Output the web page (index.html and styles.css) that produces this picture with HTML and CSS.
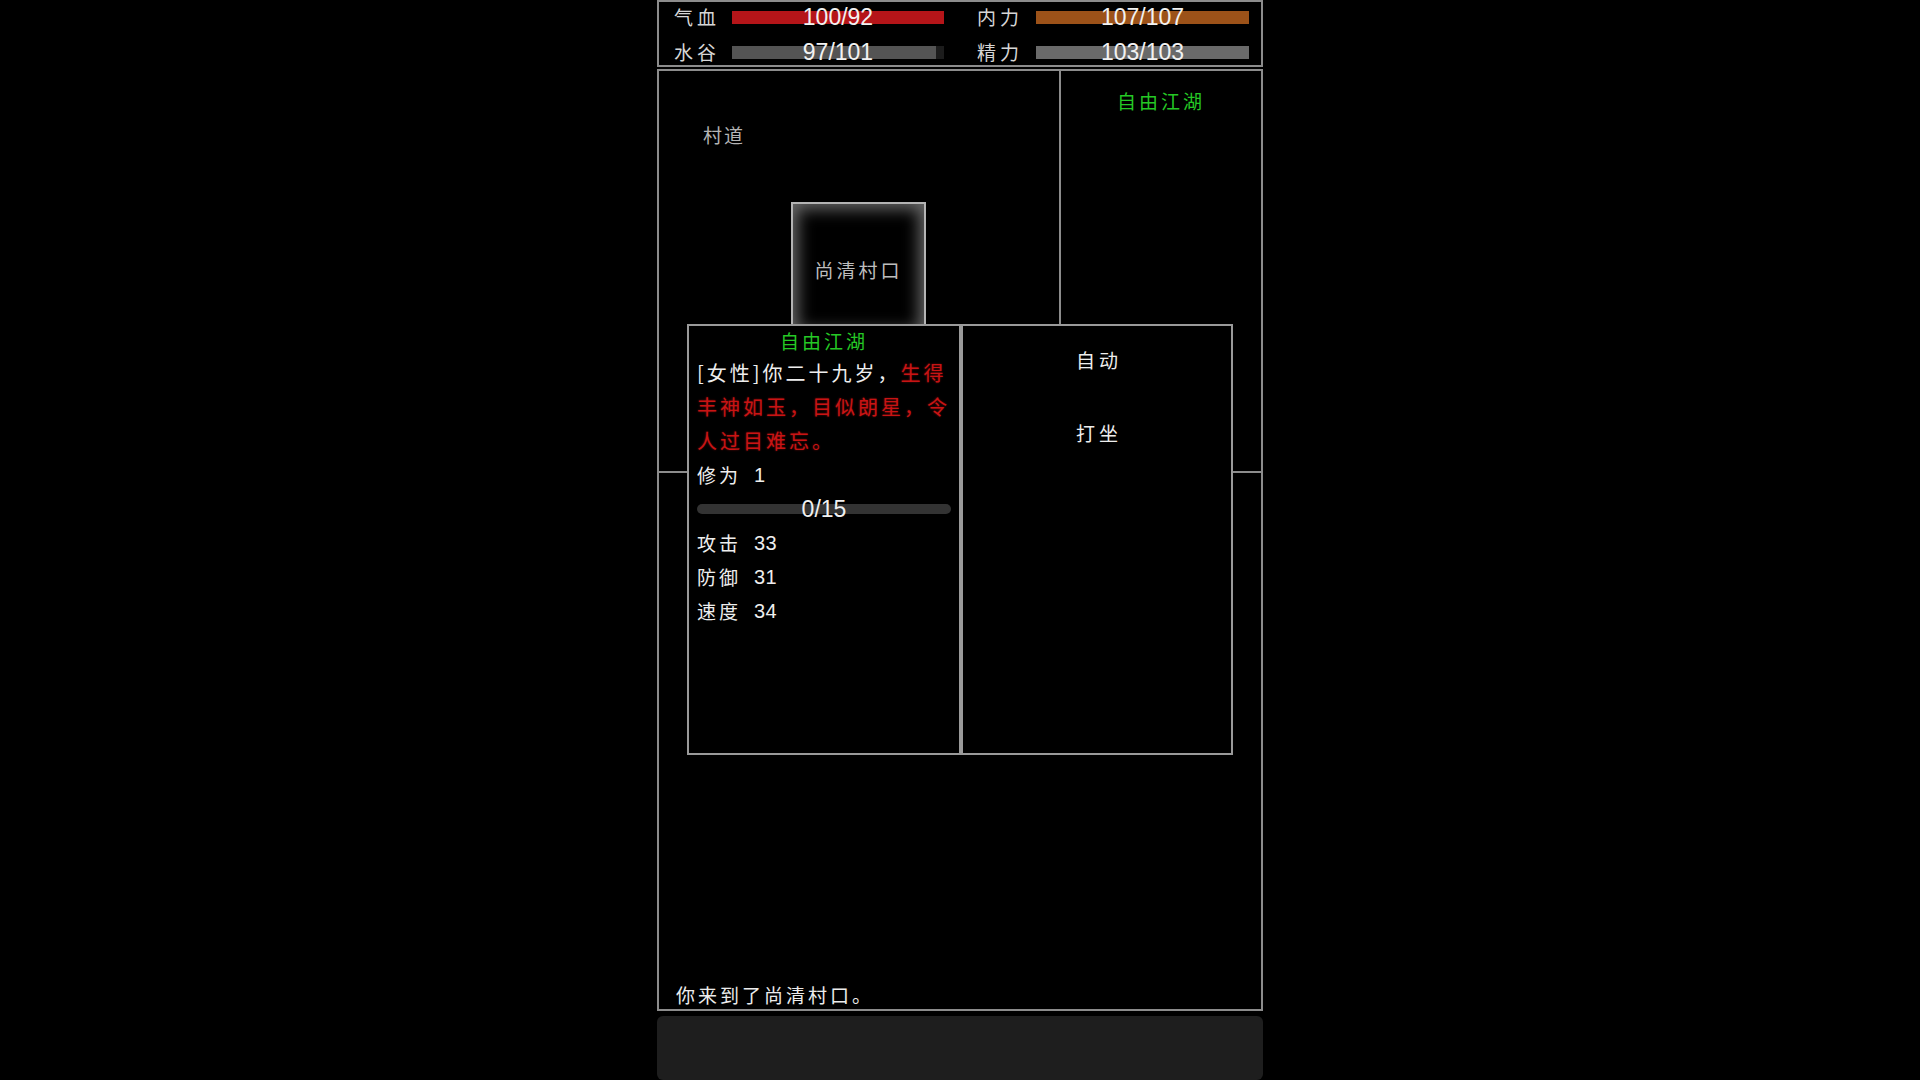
FILE: index.html
```html
<!DOCTYPE html>
<html lang="zh">
<head>
<meta charset="utf-8">
<title>自由江湖</title>
<link rel="stylesheet" href="styles.css">
</head>
<body>
<div class="game">
  <div class="status">
    <span class="label">气血</span>
    <div class="bar"><div class="fill fill-red" style="width:100%"></div><span class="val">100/92</span></div>
    <span class="spacer"></span>
    <span class="label">内力</span>
    <div class="bar"><div class="fill fill-orange" style="width:100%"></div><span class="val">107/107</span></div>

    <span class="label">水谷</span>
    <div class="bar"><div class="fill fill-gray" style="width:96%"></div><span class="val">97/101</span></div>
    <span class="spacer"></span>
    <span class="label">精力</span>
    <div class="bar"><div class="fill fill-light" style="width:100%"></div><span class="val">103/103</span></div>
  </div>

  <div class="main">
    <div class="upper">
      <div class="map">
        <span class="area-name">村道</span>
        <div class="node">尚清村口</div>
      </div>
      <div class="side">
        <div class="side-title">自由江湖</div>
      </div>
    </div>
    <div class="log">
      <p class="log-line">你来到了尚清村口。</p>
    </div>
  </div>

  <div class="input-bar"></div>

  <div class="popup">
    <div class="info">
      <div class="info-title">自由江湖</div>
      <div class="desc">[女性]你二十九岁，<span class="red">生得<br>丰神如玉，目似朗星，令<br>人过目难忘。</span></div>
      <div class="line"><span class="key">修为</span><span class="num">1</span></div>
      <div class="progress"><div class="track"></div><span class="progress-val">0/15</span></div>
      <div class="line"><span class="key">攻击</span><span class="num">33</span></div>
      <div class="line"><span class="key">防御</span><span class="num">31</span></div>
      <div class="line"><span class="key">速度</span><span class="num">34</span></div>
    </div>
    <div class="actions">
      <div class="action">自动</div>
      <div class="action">打坐</div>
    </div>
  </div>
</div>
</body>
</html>
```

FILE: styles.css
```css
* { box-sizing: border-box; }

html, body {
  margin: 0;
  padding: 0;
  background: #000;
  height: 100%;
  overflow: hidden;
}

body {
  font-family: "Liberation Sans", "Noto Sans CJK SC", sans-serif;
  color: #e8e8e8;
  font-size: 20px;
}

.game {
  position: relative;
  width: 606px;
  margin: 0 auto;
  display: flex;
  flex-direction: column;
  height: 1080px;
}

/* status bars */
.status {
  border: 2px solid #8c8c8c;
  height: 67px;
  padding: 5px 0 0 15px;
  display: grid;
  grid-template-columns: 58px 212px 33px 59px 213px;
  grid-template-rows: 20px 20px;
  row-gap: 15px;
  align-items: center;
}

.label {
  font-family: "Noto Sans CJK SC", sans-serif;
  color: #d6d6d6;
  font-size: 19px;
  letter-spacing: 4px;
  line-height: 20px;
}

.bar {
  position: relative;
  height: 13px;
  background: #1c1c1c;
}

.fill {
  height: 100%;
}

.fill-red { background: #b51519; }
.fill-orange { background: #9c5219; }
.fill-gray { background: #545454; }
.fill-light { background: #6a6a6a; }

.val {
  position: absolute;
  inset: -7px 0;
  display: flex;
  align-items: center;
  justify-content: center;
  font-size: 23px;
  color: #f2f2f2;
}

/* main window */
.main {
  margin-top: 2px;
  border: 2px solid #8c8c8c;
  height: 942px;
  display: flex;
  flex-direction: column;
}

.upper {
  height: 402px;
  border-bottom: 2px solid #8c8c8c;
  display: grid;
  grid-template-columns: 1fr 200px;
}

.map {
  position: relative;
  border-right: 2px solid #8c8c8c;
}

.area-name {
  position: absolute;
  left: 44px;
  top: 52px;
  line-height: 24px;
  font-family: "Noto Sans CJK SC", sans-serif;
  color: #b4b4b4;
  font-size: 19px;
  letter-spacing: 2px;
}

.node {
  position: absolute;
  left: 132px;
  top: 131px;
  width: 135px;
  height: 135px;
  border: 2px solid #b4b4b4;
  box-shadow: inset 0 0 16px 5px rgba(190, 190, 190, 0.55);
  display: flex;
  align-items: center;
  justify-content: center;
  font-family: "Noto Sans CJK SC", sans-serif;
  color: #bdbdbd;
  font-size: 19px;
  letter-spacing: 3px;
}

.side {
  padding-top: 16px;
  text-align: center;
}

.side-title {
  color: #25c825;
  font-family: "Noto Sans CJK SC", sans-serif;
  font-size: 19px;
  line-height: 28px;
  letter-spacing: 3px;
}

.log {
  flex: 1;
  display: flex;
  align-items: flex-end;
  padding: 0 0 0 17px;
}

.log-line {
  margin: 0;
  line-height: 28px;
  font-family: "Noto Sans CJK SC", sans-serif;
  font-size: 19px;
  letter-spacing: 3px;
  color: #ececec;
}

.input-bar {
  margin-top: 5px;
  height: 64px;
  background: #1e1e1e;
  border-radius: 6px;
}

/* popup */
.popup {
  position: absolute;
  left: 30px;
  top: 324px;
  width: 546px;
  height: 431px;
  display: grid;
  grid-template-columns: 274px 272px;
  background: #000;
}

.info, .actions {
  border: 2px solid #9a9a9a;
  background: #000;
}

.info {
  padding: 0 8px 0 8px;
}

.info-title {
  text-align: center;
  color: #25c825;
  font-family: "Noto Sans CJK SC", sans-serif;
  font-size: 19px;
  line-height: 30px;
  letter-spacing: 3px;
}

.desc, .line {
  font-size: 19px;
  line-height: 34px;
  letter-spacing: 3px;
  color: #eeeeee;
  white-space: nowrap;
}

.line {
  display: flex;
  align-items: center;
  height: 34px;
}

.key {
  font-family: "Noto Sans CJK SC", sans-serif;
  letter-spacing: 3px;
  width: 57px;
  line-height: 34px;
}

.num {
  font-size: 20px;
  letter-spacing: 0.5px;
  line-height: 34px;
}

.desc {
  font-family: "Noto Sans CJK SC", sans-serif;
  font-size: 20px;
}

.red {
  color: #c81414;
  text-shadow: 0 0 2px rgba(200, 20, 20, 0.6);
}

.progress {
  height: 34px;
  display: grid;
  align-items: center;
}

.track, .progress-val {
  grid-area: 1 / 1;
}

.track {
  height: 10px;
  border-radius: 5px;
  background: #333;
}

.progress-val {
  text-align: center;
  font-size: 23px;
  color: #f0f0f0;
  line-height: 34px;
}

.actions {
  padding-top: 19px;
  display: flex;
  flex-direction: column;
  align-items: center;
  gap: 43px;
}

.action {
  line-height: 30px;
  font-family: "Noto Sans CJK SC", sans-serif;
  font-size: 19px;
  letter-spacing: 4px;
  color: #eeeeee;
  padding-left: 4px;
}
```
